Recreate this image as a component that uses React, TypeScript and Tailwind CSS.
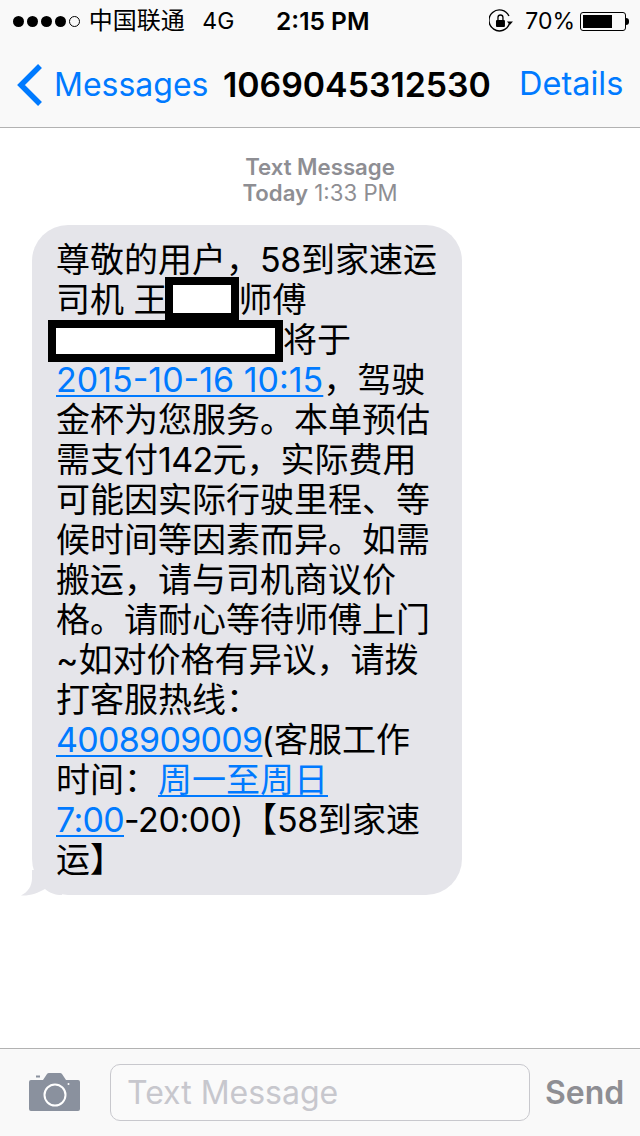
const CJK = "font-['Inter','Noto_Sans_CJK_SC',sans-serif]";

function Link({ children, tight }: { children: React.ReactNode; tight?: boolean }) {
  return (
    <span className={`text-[#007aff] underline decoration-2 underline-offset-[3px] ${tight ? "tracking-[-0.7px]" : ""}`}>
      {children}
    </span>
  );
}

function Redact({ className }: { className: string }) {
  return <span className={`absolute bg-white border-8 border-black ${className}`} />;
}

function StatusBar() {
  return (
    <div className="flex h-10 items-center text-black pl-[13px] pr-[11px] pt-[2px] leading-none">
      <div className="flex items-center gap-[3px] w-[68px]">
        {[0, 1, 2, 3].map((i) => (
          <span key={i} className="w-[11px] h-[11px] rounded-full bg-black shrink-0" />
        ))}
        <span className="w-[11px] h-[11px] rounded-full border border-black shrink-0" />
      </div>
      <span className="ml-[8px] w-[114px] text-[24px]">中国联通</span>
      <span className="w-[74px] text-[23px]">4G</span>
      <span className="font-semibold text-[24.5px] w-[214px]">2:15 PM</span>
      <svg width="24" height="24" viewBox="0 0 24 24" fill="none" className="mr-[12px]">
        <path d="M20.5 14.5A10.5 10.5 0 1 1 20 7" stroke="#000" strokeWidth="1.4" />
        <path d="M18 12.5h6l-3 3.5z" fill="#000" />
        <rect x="7" y="11" width="9" height="7" rx="1" fill="#000" />
        <path d="M9 11V8.5a2.5 2.5 0 0 1 5 0V11" stroke="#000" strokeWidth="1.3" />
      </svg>
      <span className="text-[23px]">70%</span>
      <div className="ml-[5px] flex items-center">
        <div className="w-[46px] h-[19px] rounded-[3px] border border-black p-[2px]">
          <div className="h-full w-[29px] bg-black" />
        </div>
        <span className="w-[3px] h-[7px] bg-black rounded-r-sm" />
      </div>
    </div>
  );
}

function NavBar() {
  return (
    <div className="flex h-[88px] items-center pt-[2px] border-b border-[#b2b2b2]">
      <svg width="28" height="44" viewBox="0 0 28 44" className="ml-[16px]" fill="none">
        <path d="M24 3L5 22l19 19" stroke="#007aff" strokeWidth="5.5" />
      </svg>
      <span className="ml-[10px] text-[32px] leading-none text-[#007aff] w-[169px]">Messages</span>
      <span className="text-[33.8px] leading-none font-semibold text-black w-[296px]">1069045312530</span>
      <span className="text-[32.5px] leading-none text-[#007aff]">Details</span>
    </div>
  );
}

function Bubble() {
  return (
    <div className="relative mt-[19px] ml-[32px] w-[430px] h-[670px] rounded-[36px] bg-[#e5e5ea] pl-[24px] pt-[15px] text-[34px] leading-[40px] text-black">
      <svg width="45" height="26" viewBox="0 0 45 26" className="absolute left-[-12px] bottom-[-1px]" fill="#e5e5ea">
        <path d="M12 8C12 16 8 22 1 25.500C10 26 18 23 25 19C30 23 35 25 42 25L42 0L12 0Z" />
      </svg>
      <div className="relative whitespace-nowrap">尊敬的用户，<span className="tracking-[-0.4px]">58</span>到家速运</div>
      <div className="relative whitespace-nowrap">
        司机 王
        <Redact className="left-[109px] top-[-3px] w-[74px] h-[44px]" />
        <span className="ml-[71px]">师傅</span>
      </div>
      <div className="relative whitespace-nowrap">
        <Redact className="left-[-8px] top-0 w-[235px] h-[42px]" />
        <span className="ml-[227px]">将于</span>
      </div>
      <div className="relative whitespace-nowrap">
        <Link>2015-10-16 10:15</Link>，驾驶
      </div>
      <div className="relative whitespace-nowrap">金杯为您服务。本单预估</div>
      <div className="relative whitespace-nowrap">需支付<span className="tracking-[-0.7px]">142</span>元，实际费用</div>
      <div className="relative whitespace-nowrap">可能因实际行驶里程、等</div>
      <div className="relative whitespace-nowrap">候时间等因素而异。如需</div>
      <div className="relative whitespace-nowrap">搬运，请与司机商议价</div>
      <div className="relative whitespace-nowrap">格。请耐心等待师傅上门</div>
      <div className="relative whitespace-nowrap">~如对价格有异议，请拨</div>
      <div className="relative whitespace-nowrap">打客服热线：</div>
      <div className="relative whitespace-nowrap">
        <Link tight>4008909009</Link><span className="ml-[-1px]">(</span>客服工作
      </div>
      <div className="relative whitespace-nowrap">
        时间：<Link>周一至周日</Link>
      </div>
      <div className="relative whitespace-nowrap">
        <Link tight>7:00</Link><span className="tracking-[-0.4px]">-20:00)</span>【<span className="tracking-[-0.4px]">58</span>到家速
      </div>
      <div className="relative whitespace-nowrap">运】</div>
    </div>
  );
}

function Composer() {
  return (
    <div className="flex h-[88px] items-center border-t border-[#b2b2b2] bg-[#f9f9f9] pl-[29px]">
      <svg width="51" height="38" viewBox="0 0 51 38" className="mt-[-2px] shrink-0">
        <rect x="7" y="2.500" width="4" height="2" fill="#8a919e" />
        <path fill="#8a919e" d="M2 7h12l4-6q.6-1 2-1h11q1.400 0 2 1l4 6h12a2 2 0 0 1 2 2v27a2 2 0 0 1-2 2H2a2 2 0 0 1-2-2V9a2 2 0 0 1 2-2z" />
        <circle cx="26" cy="22" r="10.500" fill="none" stroke="#fff" strokeWidth="2" />
        <circle cx="39.500" cy="11" r="1" fill="#fff" />
      </svg>
      <div className="ml-[30px] flex h-[57px] w-[420px] items-center rounded-[10px] border border-[#c8c8cd] bg-[#fafafa] pl-[16px] text-[32px] leading-none text-[#c7c7cd]">
        Text Message
      </div>
      <span className="ml-[15px] text-[32px] leading-none font-semibold text-[#8e8e93]">Send</span>
    </div>
  );
}

export default function App() {
  return (
    <div className={`flex h-[1136px] w-[640px] flex-col bg-white overflow-hidden ${CJK}`}>
      <div className="bg-[#f9f9f9]">
        <StatusBar />
        <NavBar />
      </div>
      <div className="flex-1">
        <div className="mt-[26px] text-center text-[22.2px] leading-[26px] text-[#8e8e93]">
          <div className="font-semibold">Text Message</div>
          <div>
            <span className="font-semibold">Today</span> 1:33 PM
          </div>
        </div>
        <Bubble />
      </div>
      <Composer />
    </div>
  );
}
